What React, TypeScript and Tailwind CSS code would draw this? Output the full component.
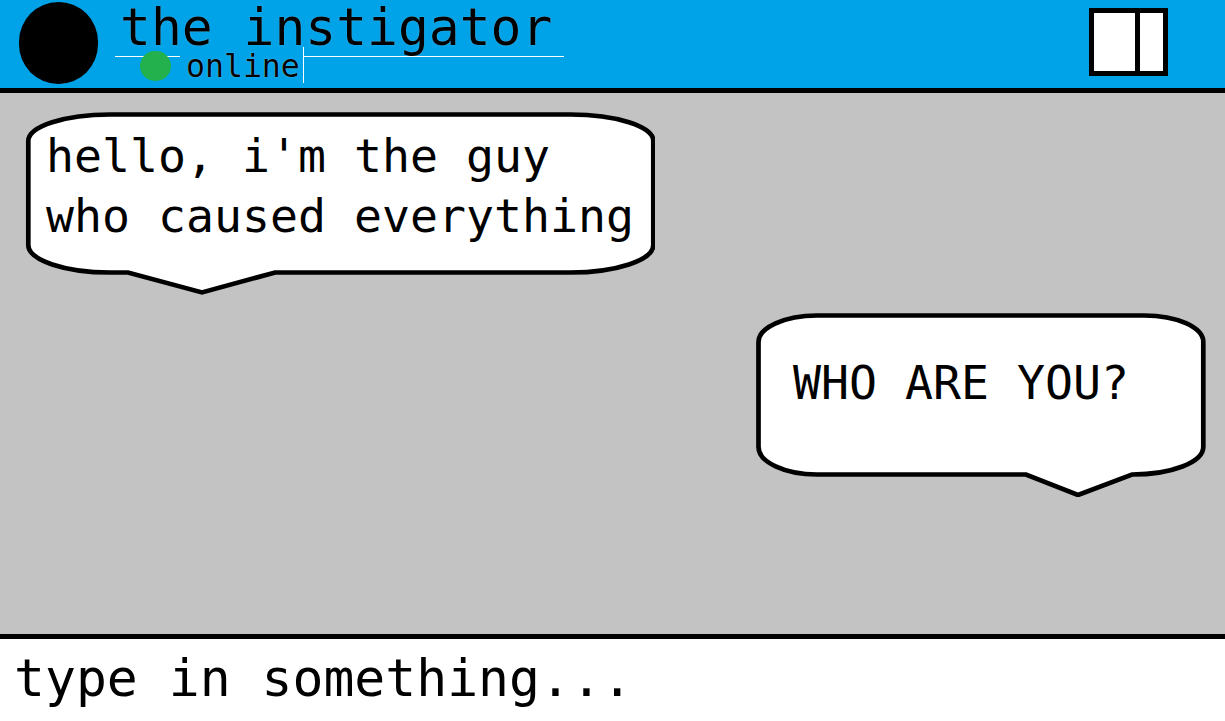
import React from 'react';

const mono = { fontFamily: '"DejaVu Sans Mono", monospace' };

const Bubble: React.FC<{ w: number; h: number; path: string; className: string; children: React.ReactNode }> = ({ w, h, path, className, children }) => (
  <div className={`relative ${className}`} style={{ width: w, height: h }}>
    <svg className="absolute inset-0" width={w} height={h} viewBox={`0 0 ${w} ${h}`}>
      <path d={path} fill="#fff" stroke="#000" strokeWidth="4.7" />
    </svg>
    <div className="relative whitespace-pre text-[46.5px] leading-[60px] text-black">{children}</div>
  </div>
);

export default function App() {
  return (
    <div className="h-[721px] w-[1225px] flex flex-col overflow-hidden bg-[#c3c3c3]" style={mono}>
      {/* header */}
      <header className="h-[93px] shrink-0 bg-[#00a2e8] border-b-[5px] border-black flex items-start pl-[19px] pr-[57px]">
        <div className="mt-[2px] w-[79px] h-[82px] rounded-full bg-black shrink-0" />
        <div className="relative ml-[17px] w-[449px] h-[83px]">
          <div className="ml-[5px] h-[47px] text-[51.3px] leading-[54px] text-black whitespace-pre [text-shadow:0_0_1px_rgba(255,255,255,0.5)]">the instigator</div>
          {/* underline broken by the status */}
          <div className="absolute left-0 top-[56px] w-[65px] h-px bg-white" />
          <div className="absolute left-[188px] top-[56px] w-[261px] h-px bg-white" />
          <div className="absolute left-[188px] top-[47px] w-px h-[36px] bg-white" />
          <div className="relative flex items-start gap-[15px] pl-[25px] h-[36px]">
            <div className="mt-[4px] w-[31px] h-[30px] rounded-full bg-[#22b14c]" />
            <span className="text-[31.5px] leading-[38px] text-black whitespace-pre [text-shadow:0_0_1px_rgba(255,255,255,0.7)]">online</span>
          </div>
        </div>
        <div className="ml-auto mt-[8px] w-[79px] h-[68px] border-[5px] border-black flex bg-white">
          <div className="w-[41px] h-full border-r-[5px] border-black box-content" />
        </div>
      </header>

      {/* messages */}
      <div className="flex-1 flex flex-col pt-[19px]">
        <Bubble
          w={630}
          h={183}
          className="ml-[25px] pl-[21px] pt-[14px]"
          path="M3.3 29 A82 26.5 0 0 1 85 2.5 L545 2.5 A83 26.5 0 0 1 628.3 29 L628.3 133 A83 27.5 0 0 1 545 160.5 L250 160.5 L177 180.4 L103 160.5 L85 160.5 A82 27.5 0 0 1 3.3 133 Z"
        >
          {"hello, i'm the guy\nwho caused everything"}
        </Bubble>
        <Bubble
          w={450}
          h={184}
          className="ml-[756px] mt-[18px] pl-[37px] pt-[40px]"
          path="M2.5 29 A59 26.5 0 0 1 61 2.5 L388 2.5 A59 26.5 0 0 1 447.3 29 L447.3 134 A71 27.5 0 0 1 376 161.5 L322 182 L270 161.5 L61 161.5 A59 27.5 0 0 1 2.5 134 Z"
        >
          WHO ARE YOU?
        </Bubble>
      </div>

      {/* input */}
      <div className="h-[87px] shrink-0 bg-white border-t-[5px] border-black pl-[14px] pt-[5px] text-[51.4px] leading-[68px] text-black whitespace-pre">
        type in something...
      </div>
    </div>
  );
}
